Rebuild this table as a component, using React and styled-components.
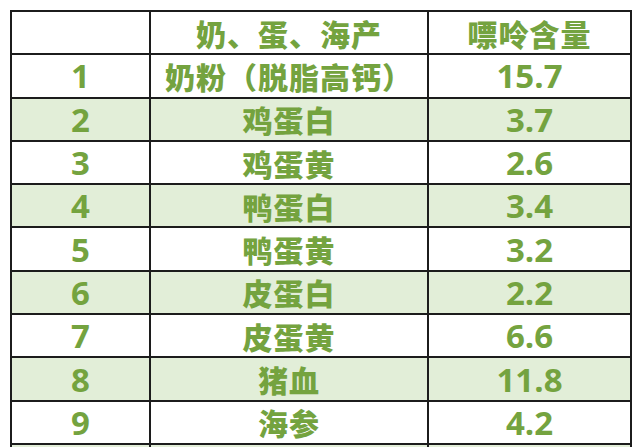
import React from 'react';
import styled, { createGlobalStyle } from 'styled-components';

const GlobalStyle = createGlobalStyle`
  html, body {
    margin: 0;
    padding: 0;
    background: #ffffff;
  }
  body {
    font-family: "Noto Sans CJK SC", "Noto Sans", sans-serif;
    overflow: hidden;
  }
`;

const Page = styled.div`
  width: 640px;
  height: 447px;
  padding: 10px 0 0 10px;
  box-sizing: border-box;
  overflow: hidden;
`;

const Table = styled.table`
  border-collapse: collapse;
  table-layout: fixed;
  width: 620px;
`;

const Row = styled.tr`
  height: 43.3px;
  background: ${(p) => (p.shaded ? '#e2eed8' : '#ffffff')};
`;

const Cell = styled.td`
  border: 2px solid #1c1c1c;
  padding: 0;
  text-align: center;
  vertical-align: middle;
  color: #74a33f;
  font-weight: 900;
  font-size: 30px;
  line-height: 1;
  letter-spacing: 1px;
  white-space: nowrap;
`;

const NumCell = styled(Cell)`
  font-family: "Open Sans", "Noto Sans", sans-serif;
  font-weight: 700;
  font-size: 33px;
  letter-spacing: 0;
`;

const rows = [
  ['1', '奶粉（脱脂高钙）', '15.7'],
  ['2', '鸡蛋白', '3.7'],
  ['3', '鸡蛋黄', '2.6'],
  ['4', '鸭蛋白', '3.4'],
  ['5', '鸭蛋黄', '3.2'],
  ['6', '皮蛋白', '2.2'],
  ['7', '皮蛋黄', '6.6'],
  ['8', '猪血', '11.8'],
  ['9', '海参', '4.2'],
];

export default function App() {
  return (
    <Page>
      <GlobalStyle />
      <Table>
        <colgroup>
          <col style={{ width: 139 }} />
          <col style={{ width: 278 }} />
          <col style={{ width: 203 }} />
        </colgroup>
        <tbody>
          <Row>
            <Cell />
            <Cell>奶、蛋、海产</Cell>
            <Cell>嘌呤含量</Cell>
          </Row>
          {rows.map(([n, name, value]) => (
            <Row key={n} shaded={Number(n) % 2 === 0}>
              <NumCell>{n}</NumCell>
              <Cell>{name}</Cell>
              <NumCell>{value}</NumCell>
            </Row>
          ))}
          <Row shaded>
            <NumCell />
            <Cell />
            <NumCell />
          </Row>
        </tbody>
      </Table>
    </Page>
  );
}
